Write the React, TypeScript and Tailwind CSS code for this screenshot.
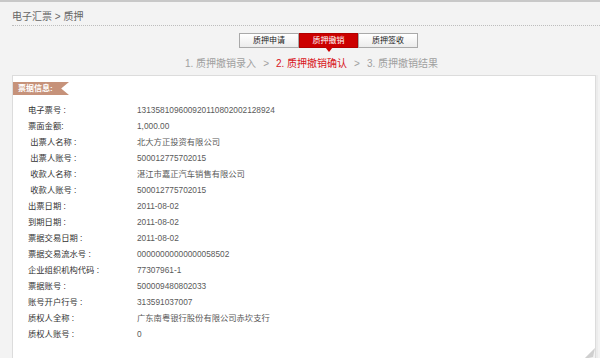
const rows: [string, string][] = [
  ["电子票号 :", "131358109600920110802002128924"],
  ["票面金额:", "1,000.00"],
  [" 出票人名称 :", "北大方正投资有限公司"],
  [" 出票人账号 :", "500012775702015"],
  [" 收款人名称 :", "湛江市嘉正汽车销售有限公司"],
  [" 收款人账号 :", "500012775702015"],
  ["出票日期 :", "2011-08-02"],
  ["到期日期 :", "2011-08-02"],
  ["票据交易日期 :", "2011-08-02"],
  ["票据交易流水号 :", "00000000000000058502"],
  ["企业组织机构代码 :", "77307961-1"],
  ["票据账号 :", "500009480802033"],
  ["账号开户行号 :", "313591037007"],
  ["质权人全称 :", "广东南粤银行股份有限公司赤坎支行"],
  ["质权人账号 :", "0"],
]

const tabs = ["质押申请", "质押撤销", "质押签收"]

export default function App() {
  return (
    <div className="w-[600px] h-[358px] overflow-hidden bg-[#f3f3f3] border-t-2 border-[#c8c8c8] font-['Liberation_Sans','Noto_Sans_CJK_SC',sans-serif]">
      {/* breadcrumb */}
      <div className="ml-3 h-[24px] border-b border-dotted border-[#bdbdbd] pt-[9px] text-[10px] leading-[12px] text-[#666]">
        电子汇票 &gt; 质押
      </div>

      {/* tabs */}
      <div className="mt-[7px] ml-[239px] flex">
        {tabs.map((t, i) =>
          i === 1 ? (
            <div
              key={t}
              className="relative w-[59px] h-[15px] bg-[#cc0000] border border-[#b00000] text-white text-[8px] leading-[13px] text-center"
            >
              {t}
              <span className="absolute left-1/2 -translate-x-1/2 top-[13px] w-0 h-0 border-l-[4px] border-r-[4px] border-t-[5px] border-l-transparent border-r-transparent border-t-[#cc0000]" />
            </div>
          ) : (
            <div
              key={t}
              className="w-[60px] h-[15px] bg-gradient-to-b from-white to-[#ececec] border border-[#a9a9a9] text-[#222] text-[8px] leading-[13px] text-center"
            >
              {t}
            </div>
          )
        )}
      </div>

      {/* steps */}
      <div className="mt-[10px] ml-[185px] flex gap-[7px] text-[10px] leading-[12px] text-[#a0a0a0]">
        <span>1. 质押撤销录入</span>
        <span>&gt;</span>
        <span className="text-[#d8141c]">2. 质押撤销确认</span>
        <span>&gt;</span>
        <span>3. 质押撤销结果</span>
      </div>

      {/* panel */}
      <div className="relative mt-[5px] ml-3 mr-[4px] h-[285px] bg-white border border-[#dcdcdc] border-b-[#c4c4c4] border-b-dotted shadow-[2px_0_0_#ececec]">
        <div className="mt-[6px] w-[56px] h-[13px] pl-[5px] bg-[#c6927a] text-white font-bold text-[8px] leading-[13px] [clip-path:polygon(0_0,100%_0,86%_50%,100%_100%,0_100%)]">
          票据信息:
        </div>

        <div className="mt-[7px] pl-[15px]">
          {rows.map(([label, value]) => (
            <div key={label} className="flex h-[16px] items-center text-[8.3px]">
              <span className="w-[109px] whitespace-pre text-[#333]">{label}</span>
              <span className="text-[#5a5a5a]">{value}</span>
            </div>
          ))}
        </div>

        <svg className="absolute right-0 bottom-0" width="11" height="11" viewBox="0 0 11 11">
          <path d="M11 0 L0 11 L11 11 Z" fill="#f3f3f3" />
          <path d="M11 0 L0 11 L9 9 Z" fill="#cfcfcf" />
        </svg>
      </div>
    </div>
  )
}
